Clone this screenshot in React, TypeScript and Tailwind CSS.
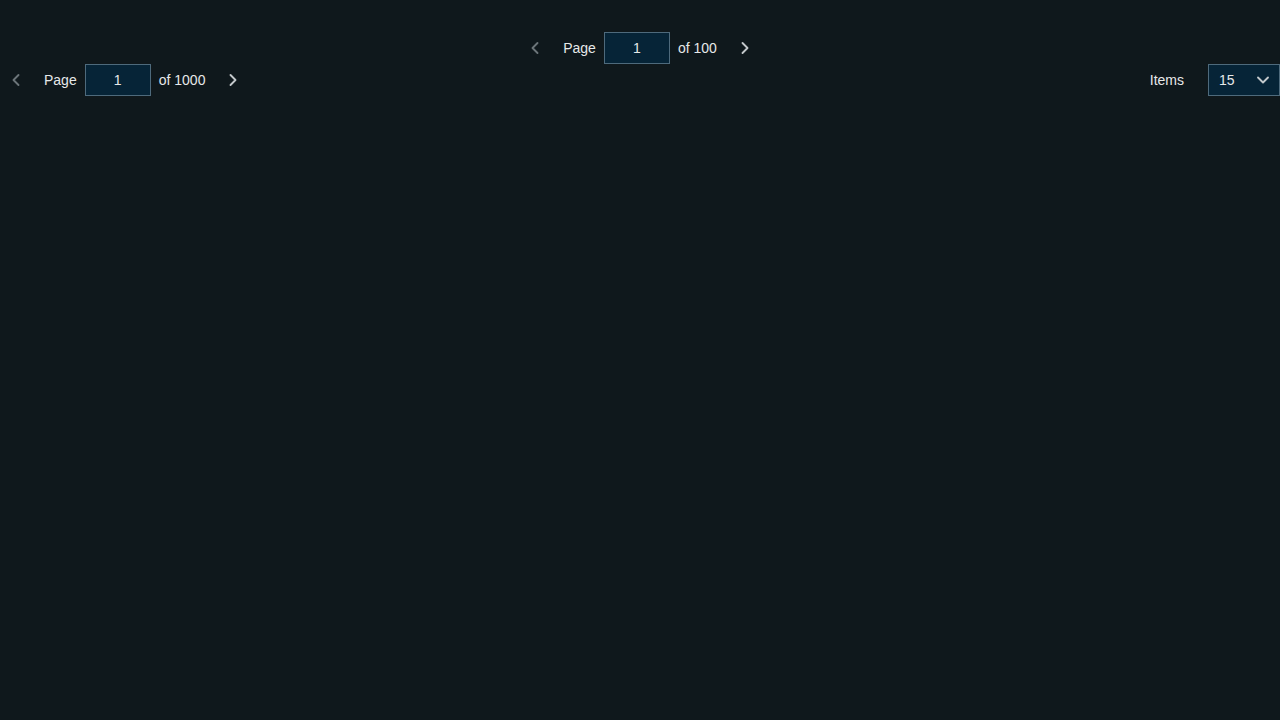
import { ChevronLeft, ChevronRight, ChevronDown } from 'lucide-react';

interface PagerProps {
    total: number;
}

function Pager({ total }: PagerProps) {
    return (
        <div className="flex items-center h-8">
            <button className="w-8 h-8 flex items-center justify-center text-[#6b7479]">
                <ChevronLeft className="w-5 h-5" strokeWidth={2.25} />
            </button>
            <span className="ml-3 text-sm text-[#e6e8e9]">Page</span>
            <input
                readOnly
                value="1"
                className="ml-2 w-[66px] h-8 bg-[#062437] border border-[#4e6a7c] text-center text-sm text-[#e6e8e9] outline-none"
            />
            <span className="ml-2 text-sm text-[#e6e8e9]">of {total}</span>
            <button className="ml-3 w-8 h-8 flex items-center justify-center text-[#c3c8cb]">
                <ChevronRight className="w-5 h-5" strokeWidth={2.25} />
            </button>
        </div>
    );
}

export default function App() {
    return (
        <div className="w-full h-[720px] bg-[#0f181c] flex flex-col" style={{ fontFamily: '"Liberation Sans", Arial, sans-serif' }}>
            <div className="flex justify-center mt-8">
                <Pager total={100} />
            </div>
            <div className="flex items-center justify-between">
                <Pager total={1000} />
                <div className="flex items-center h-8">
                    <span className="text-sm text-[#e6e8e9]">Items</span>
                    <div className="ml-6 w-[72px] h-8 bg-[#062437] border border-[#4e6a7c] flex items-center justify-between pl-[10px] pr-[6px]">
                        <span className="text-sm text-[#e6e8e9]">15</span>
                        <ChevronDown className="w-5 h-5 text-[#c3c8cb]" strokeWidth={2.25} />
                    </div>
                </div>
            </div>
        </div>
    );
}
